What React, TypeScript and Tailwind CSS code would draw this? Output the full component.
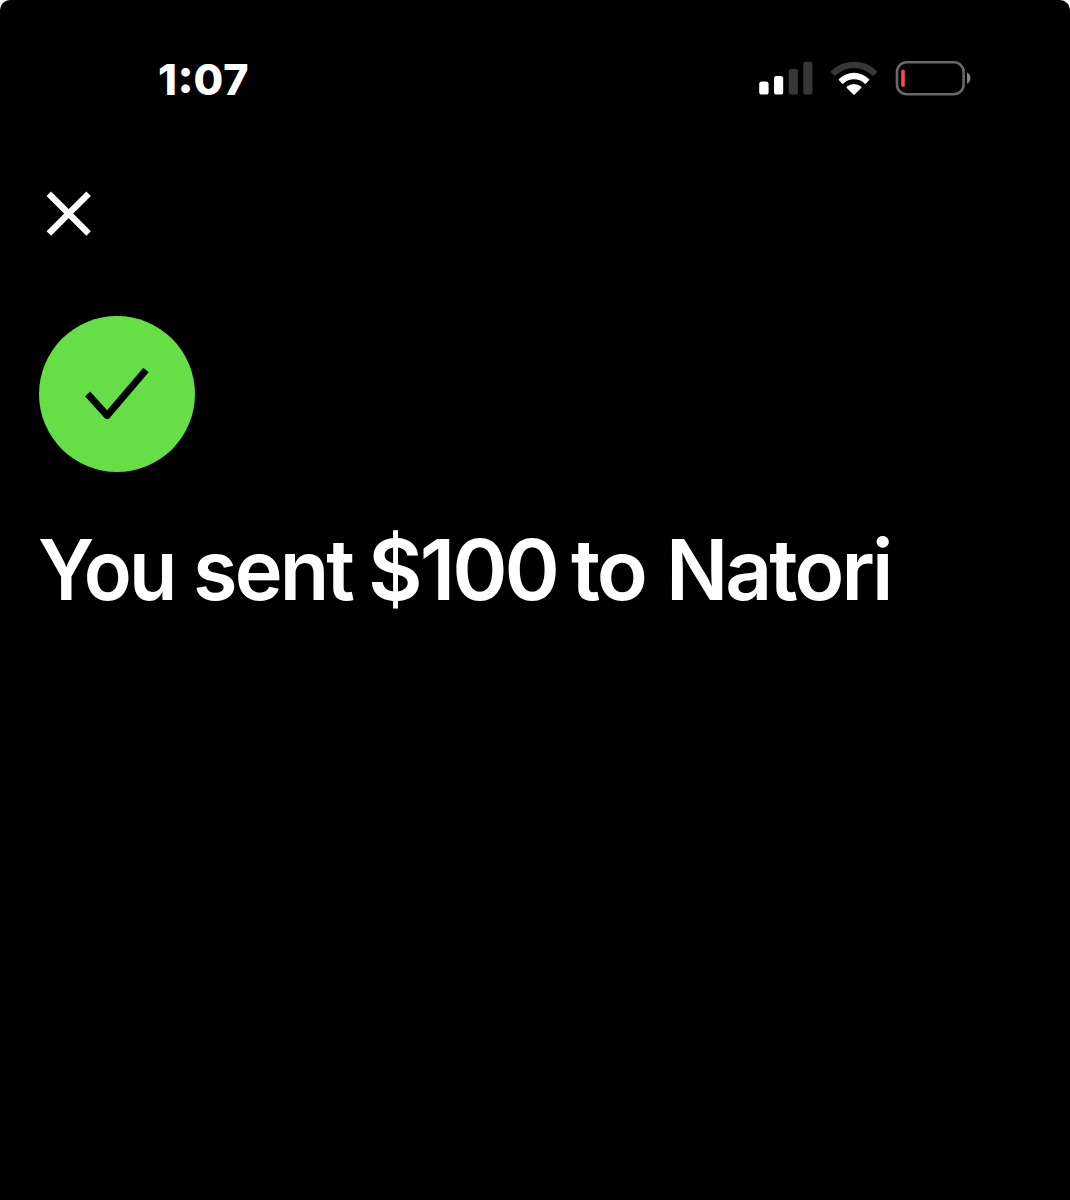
function SignalIcon() {
  return (
    <svg width="54" height="34" viewBox="0 0 54 34" fill="#fff" className="shrink-0">
      <rect x="0.2" y="20.6" width="9.4" height="13" rx="2.6" />
      <rect x="15" y="15" width="9.2" height="18.6" rx="2.6" />
      <rect x="29.7" y="8" width="9.2" height="25.6" rx="2.6" fill="#373737" />
      <rect x="44.3" y="0.8" width="9.2" height="32.8" rx="2.6" fill="#373737" />
    </svg>
  );
}

function WifiIcon() {
  return (
    <svg width="48" height="36" viewBox="0 0 48 36" fill="#fff" className="shrink-0">
      <path
        d="M1.1 12.6 Q0.4 11.9 1.1 11.1 A32.5 32.5 0 0 1 46.9 11.1 Q47.6 11.9 46.9 12.6 L44 15.6 Q43.3 16.3 42.5 15.6 A26.5 26.5 0 0 0 5.5 15.6 Q4.7 16.3 4 15.6 Z"
        fill="#373737"
      />
      <path d="M9 20.3 Q8.3 19.6 9 18.9 A21.6 21.6 0 0 1 39 18.9 Q39.7 19.6 39 20.3 L36 23.4 Q35.2 24.1 34.5 23.4 A15.3 15.3 0 0 0 13.5 23.4 Q12.8 24.1 12 23.4 Z" />
      <path d="M16.8 28 Q16.1 27.2 16.9 26.5 A11 11 0 0 1 31.1 26.5 Q31.9 27.2 31.2 28 L24.7 34.5 Q24 35.2 23.3 34.5 Z" />
    </svg>
  );
}

function BatteryIcon() {
  return (
    <svg width="76" height="36" viewBox="0 0 76 36" fill="none" className="shrink-0">
      <rect x="2" y="2.2" width="66.6" height="32" rx="9.8" stroke="#686868" strokeWidth="2.6" />
      <rect x="6.2" y="9.7" width="3.6" height="17" rx="1.2" fill="#ee5145" />
      <path d="M72 12.4 C76.6 14 76.6 22 72 23.8 Z" fill="#858585" />
    </svg>
  );
}

export default function App() {
  return (
    <div className="h-[1200px] w-[1070px] overflow-hidden bg-white font-['Inter',sans-serif] text-white">
      <main className="flex h-full flex-col overflow-hidden rounded-t-[10px] bg-black">
        <header className="mt-[61px] flex h-[34px] items-start pl-[158px] pr-[99px]">
          <time className="mt-[-3px] text-[43px] font-extrabold leading-[43px] tracking-[0.7px]">
            1<span className="inline-block -translate-y-[4px] scale-110">:</span>07
          </time>
          <div className="ml-auto flex items-start">
            <SignalIcon />
            <div className="-mt-px ml-[17px] flex gap-[17px]">
              <WifiIcon />
              <BatteryIcon />
            </div>
          </div>
        </header>

        <button aria-label="Close" className="ml-[45px] mt-[95px] size-12">
          <svg width="48" height="48" viewBox="0 0 48 48" stroke="#fff" strokeWidth="6.4">
            <path d="M3.8 3.8 L43.6 43.6 M43.6 3.8 L3.8 43.6" />
          </svg>
        </button>

        <div className="ml-[39px] mt-[78px] size-[156px] shrink-0 rounded-full bg-[#66df47]">
          <svg width="156" height="156" viewBox="0 0 156 156" fill="none" stroke="#000" strokeWidth="7" strokeLinejoin="round">
            <path d="M48.6 77.8 L68.2 99.6 L107 54" />
          </svg>
        </div>

        <h1 className="ml-[38px] mt-12 flex whitespace-pre text-[84px] font-semibold leading-[100px] tracking-[-3px]">
          <span className="w-[155px] origin-left scale-x-[0.94]">You </span>
          <span className="w-[175px] origin-left scale-x-[0.965]">sent </span>
          <span className="w-[203px] origin-left">$100 </span>
          <span className="w-[95px] origin-left">to </span>
          <span className="origin-left scale-x-[0.975]">Natori</span>
        </h1>
      </main>
    </div>
  );
}
